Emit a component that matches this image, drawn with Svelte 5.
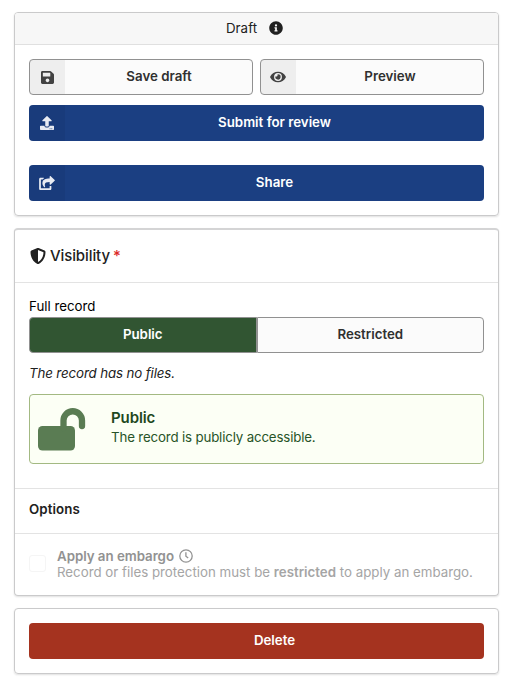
<script>
  let access = $state('public');
</script>

<main>
  <section class="card">
    <header class="status">
      <span class="status-text">Draft</span>
      <svg class="info" viewBox="0 0 512 512"><path d="M256 8C119 8 8 119 8 256s111 248 248 248 248-111 248-248S393 8 256 8zm0 110a42 42 0 1 1 0 84 42 42 0 0 1 0-84zm56 254c0 7-5 12-12 12h-88c-7 0-12-5-12-12v-24c0-7 5-12 12-12h12v-64h-12c-7 0-12-5-12-12v-24c0-7 5-12 12-12h64c7 0 12 5 12 12v100h12c7 0 12 5 12 12z"/></svg>
    </header>
    <div class="actions">
      <div class="row">
        <button class="btn basic">
          <span class="icon"><svg width="13" height="15" viewBox="0 0 448 512"><path d="m433.900 129.900-83.900-83.900A48 48 0 0 0 316.100 32H48C21.500 32 0 53.500 0 80v352c0 26.500 21.500 48 48 48h352c26.500 0 48-21.500 48-48V163.900a48 48 0 0 0-14.100-34zM224 416c-35.300 0-64-28.700-64-64s28.700-64 64-64 64 28.700 64 64-28.700 64-64 64zm96-304.500V212c0 6.600-5.400 12-12 12H76c-6.600 0-12-5.400-12-12V108c0-6.600 5.400-12 12-12h228.500c3.200 0 6.200 1.300 8.500 3.500l3.500 3.500a12 12 0 0 1 3.500 8.500z"/></svg></span>
          <span class="label">Save draft</span>
        </button>
        <button class="btn basic">
          <span class="icon"><svg width="16" height="14" viewBox="0 0 576 512"><path d="M572.500 241.400C518.300 135.600 410.900 64 288 64S57.700 135.600 3.500 241.400a32.400 32.400 0 0 0 0 29.200C57.700 376.400 165.100 448 288 448s230.300-71.600 284.500-177.400a32.400 32.400 0 0 0 0-29.200zM288 400a144 144 0 1 1 144-144 143.900 143.900 0 0 1-144 144zm0-240a95.300 95.300 0 0 0-25.300 3.800 47.900 47.900 0 0 1-66.900 66.900A95.800 95.800 0 1 0 288 160z"/></svg></span>
          <span class="label">Preview</span>
        </button>
      </div>
      <button class="btn primary submit">
        <span class="icon"><svg width="14" height="14" viewBox="0 0 512 512"><path d="M296 384h-80c-13.300 0-24-10.700-24-24V192h-87.700c-17.800 0-26.700-21.500-14.100-34.100L242.300 5.700c7.500-7.500 19.800-7.500 27.300 0l152.200 152.200c12.600 12.600 3.700 34.100-14.100 34.100H320v168c0 13.300-10.700 24-24 24zm216-8v112c0 13.300-10.700 24-24 24H24c-13.300 0-24-10.700-24-24V376c0-13.300 10.700-24 24-24h136v8c0 30.900 25.100 56 56 56h80c30.900 0 56-25.100 56-56v-8h136c13.300 0 24 10.700 24 24zm-124 88c0-11-9-20-20-20s-20 9-20 20 9 20 20 20 20-9 20-20zm64 0c0-11-9-20-20-20s-20 9-20 20 9 20 20 20 20-9 20-20z"/></svg></span>
        <span class="label">Submit for review</span>
      </button>
      <button class="btn primary">
        <span class="icon"><svg width="16" height="14" viewBox="0 0 576 512"><path d="M568.500 177.400 424.500 313c-15.200 14.300-40.500 3.700-40.500-17.500v-71.900c-144.600 1-205.600 35.100-164.800 171.400 4.500 15.100-12.800 26.600-25 17.300C155.300 383.100 120 326.500 120 269.300c0-143.900 117.600-172.500 264-173.300V24c0-21.200 25.300-31.800 40.500-17.500l144 135.600a24 24 0 0 1 0 35.300zM384 379.100V448H64V128h50.900c3.300 0 6.400-1.300 8.700-3.700 13.200-13.700 28.700-25.800 45.500-35.700C179 82.700 174.900 64 163 64H48C21.500 64 0 85.500 0 112v352c0 26.500 21.500 48 48 48h352c26.500 0 48-21.500 48-48v-88.800c0-8.200-7.800-14.200-15.700-11.900-11.100 3.200-22.900 4.100-34.300 2.600-7.300-1-14 5.800-14 13.200z"/></svg></span>
        <span class="label">Share</span>
      </button>
    </div>
  </section>

  <section class="card visibility">
    <header class="title">
      <svg width="16" height="16" viewBox="0 0 512 512"><path d="m466.500 83.700-192-80a48.200 48.200 0 0 0-36.900 0l-192 80C27.700 91.100 16 108.600 16 128c0 198.500 114.500 335.700 221.500 380.300 11.800 4.900 25.100 4.900 36.900 0C360.100 472.600 496 349.300 496 128c0-19.400-11.700-36.900-29.500-44.300zM256.100 446.300 256 65.300l175.900 73.300c-3.300 151.400-82.100 261.100-175.800 307.700z"/></svg>
      <h2>Visibility<span class="required">*</span></h2>
    </header>
    <div class="access">
      <div class="field">Full record</div>
      <div class="toggle">
        <button class:active={access === 'public'} onclick={() => (access = 'public')}>Public</button>
        <button class:active={access === 'restricted'} onclick={() => (access = 'restricted')}>Restricted</button>
      </div>
      <em>The record has no files.</em>
      <div class="message">
        <svg width="48" height="43" viewBox="0 0 48 43"><rect y="18" width="37" height="24.500" rx="4.500"/><path class="shackle" d="M25.500 20v-7.500a9.250 9.250 0 0 1 18.500 0V18"/></svg>
        <div>
          <h3>Public</h3>
          <p>The record is publicly accessible.</p>
        </div>
      </div>
    </div>
    <div class="options">Options</div>
    <div class="embargo">
      <span class="checkbox"></span>
      <div>
        <div class="embargo-title">Apply an embargo
          <svg class="clock" width="14" height="14" viewBox="0 0 14 14"><circle cx="7" cy="7" r="6.200"/><path d="M6.900 3.200v4.100l2.300 1.800"/></svg>
        </div>
        <div class="help">Record or files protection must be <b>restricted</b> to apply an embargo.</div>
      </div>
    </div>
  </section>

  <section class="card danger">
    <button class="btn delete"><span class="label">Delete</span></button>
  </section>
</main>

<style>
  :global(body) { background: #fff; }
  main {
    box-sizing: border-box;
    width: 511px;
    height: 689px;
    padding: 12px 12px 0 14px;
    display: flex;
    flex-direction: column;
    gap: 12px;
    font: 13.3px/18px Inter, "Open Sans", sans-serif;
    color: #212121;
  }
  * { box-sizing: border-box; }
  svg { fill: currentColor; display: block; flex: none; }
  h2, h3, p { margin: 0; }
  b { font-weight: 600; }
  .card {
    border: 1px solid #cacacb;
    border-radius: 4px;
    box-shadow: 0 1px 2px rgba(34, 36, 38, 0.14);
    height: 204px;
    flex: none;
    overflow: hidden;
  }
  .status {
    height: 32px;
    display: flex;
    align-items: center;
    justify-content: center;
    gap: 12px;
    background: #f7f7f7;
    border-bottom: 1px solid #e0e0e0;
    padding-right: 4px;
  }
  .status-text { padding-bottom: 2px; letter-spacing: 0.05px; }
  .info { width: 14px; height: 14px; margin-bottom: 2px; }
  .actions { padding: 14px; display: flex; flex-direction: column; }
  .row { display: flex; gap: 7px; margin-bottom: 10px; }
  .btn {
    height: 36px;
    flex: 1 0 36px;
    padding: 0;
    border: 0;
    border-radius: 4px;
    display: flex;
    font: inherit;
    overflow: hidden;
  }
  .basic { background: #fbfbfb; color: #303030; border: 1px solid #919191; flex: 1; }
  .icon {
    width: 36px;
    display: flex;
    align-items: center;
    justify-content: center;
    background: rgba(0, 0, 0, 0.05);
  }
  .icon svg { opacity: 0.9; }
  .basic .icon { width: 35px; padding-right: 1px; }
  .basic .label { padding-left: 1px; }
  .label { flex: 1; align-self: center; text-align: center; font-weight: 600; padding-bottom: 2px; }
  .primary { background: #1b3f82; color: #fff; flex: none; }
  .submit { margin-bottom: 24px; }
  .visibility { height: 368px; border-top: 2px solid #d4d4d5; }
  .title {
    height: 53px;
    display: flex;
    align-items: center;
    gap: 4px;
    padding: 0 0 1px 15px;
    border-bottom: 1px solid #e3e3e3;
  }
  h2 { font-size: 15px; line-height: 20px; font-weight: 500; letter-spacing: -0.1px; }
  .required { color: #db2828; margin-left: 3px; }
  .access { height: 206px; padding: 14px 14px 0; border-bottom: 1px solid #e3e3e3; }
  .field { color: #000; height: 20px; }
  .toggle { display: flex; height: 36px; }
  .toggle button {
    flex: 1;
    padding: 0 0 2px;
    font: inherit;
    font-weight: 600;
    color: #303030;
    background: #fbfbfb;
    border: 1px solid #919191;
  }
  .toggle button:first-child { border-radius: 4px 0 0 4px; }
  .toggle button:last-child { border-radius: 0 4px 4px 0; }
  .toggle .active { background: #315532; color: #fff; }
  em { display: block; margin: 11px 0 12px; letter-spacing: -0.12px; }
  .message {
    height: 70px;
    display: flex;
    gap: 25px;
    padding: 13px 8px;
    color: #285428;
    background: #fcfff5;
    border: 1px solid #a3b982;
    border-radius: 4px;
  }
  .message svg { color: #5a7c53; }
  .message p { letter-spacing: -0.16px; }
  .shackle { fill: none; stroke: currentColor; stroke-width: 6.3; stroke-linecap: round; }
  h3 { font-size: 15px; line-height: 20px; font-weight: 600; color: #1e481e; letter-spacing: -0.1px; }
  .options { height: 45px; padding: 11px 14px; font-weight: 600; border-bottom: 1px solid #e3e3e3; letter-spacing: 0.1px; }
  .embargo { display: flex; gap: 11px; padding: 14px 14px; color: #a5a5a5; line-height: 16px; }
  .checkbox { width: 17px; height: 17px; margin-top: 7px; border: 1px solid #f5f5f5; border-radius: 3px; }
  .embargo-title { display: flex; align-items: center; gap: 5px; font-weight: 600; color: #929292; letter-spacing: -0.03px; }
  .clock { fill: none; stroke: currentColor; stroke-width: 1.3; }
  .help { white-space: nowrap; }
  .danger { height: 66px; padding: 14px; }
  .delete { width: 100%; background: #a5331f; color: #fff; }
  .delete .label { padding-left: 36px; }
</style>
